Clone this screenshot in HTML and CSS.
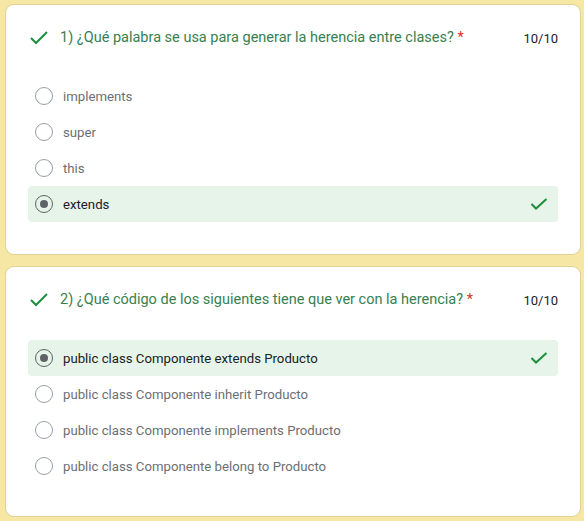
FILE: index.html
```html
<!DOCTYPE html>
<html lang="es">
<head>
<meta charset="utf-8">
<link rel="stylesheet" href="styles.css">
</head>
<body>
<div class="page">
  <section class="card">
    <div class="header">
      <svg class="qcheck" width="18" height="14" viewBox="0 0 18 14"><polyline points="1,7 6,12 17,1" fill="none" stroke="#1e8e3e" stroke-width="2"/></svg>
      <div class="title">1) ¿Qué palabra se usa para generar la herencia entre clases? <span class="req">*</span></div>
      <div class="score">10/10</div>
    </div>
    <div class="options">
      <div class="opt"><span class="radio"></span><span class="label">implements</span></div>
      <div class="opt"><span class="radio"></span><span class="label">super</span></div>
      <div class="opt"><span class="radio"></span><span class="label">this</span></div>
      <div class="opt correct"><span class="radio on"></span><span class="label">extends</span>
        <svg class="ocheck" width="18" height="13" viewBox="0 0 18 13"><polyline points="1.5,6 6,10.5 16.5,1" fill="none" stroke="#1e8e3e" stroke-width="2"/></svg></div>
    </div>
  </section>
  <section class="card">
    <div class="header">
      <svg class="qcheck" width="18" height="14" viewBox="0 0 18 14"><polyline points="1,7 6,12 17,1" fill="none" stroke="#1e8e3e" stroke-width="2"/></svg>
      <div class="title">2) ¿Qué código de los siguientes tiene que ver con la herencia? <span class="req">*</span></div>
      <div class="score">10/10</div>
    </div>
    <div class="options">
      <div class="opt correct"><span class="radio on"></span><span class="label">public class Componente extends Producto</span>
        <svg class="ocheck" width="18" height="13" viewBox="0 0 18 13"><polyline points="1.5,6 6,10.5 16.5,1" fill="none" stroke="#1e8e3e" stroke-width="2"/></svg></div>
      <div class="opt"><span class="radio"></span><span class="label">public class Componente inherit Producto</span></div>
      <div class="opt"><span class="radio"></span><span class="label">public class Componente implements Producto</span></div>
      <div class="opt"><span class="radio"></span><span class="label">public class Componente belong to Producto</span></div>
    </div>
  </section>
</div>
</body>
</html>
```
FILE: styles.css
```css
html, body {
  margin: 0;
  padding: 0;
  background: #f6e8a4;
  font-family: Roboto, "Liberation Sans", sans-serif;
}
.page {
  display: flex;
  flex-direction: column;
  gap: 13px;
  padding: 5px 4px 5px 6px;
}
.card {
  background: #ffffff;
  border-radius: 8px;
  box-shadow: 0 0 0 1px rgba(200, 190, 140, 0.5);
  padding: 24px 22px 32px;
  height: 249px;
  box-sizing: border-box;
}
.header {
  display: flex;
  align-items: center;
  height: 18px;
  padding-left: 2px;
  margin-bottom: 31px;
}
.qcheck {
  flex: none;
  margin-right: 12px;
}
.title {
  flex: 1;
  font-size: 14.5px;
  color: #38804f;
  line-height: 18px;
}
.req {
  color: #d93025;
}
.score {
  font-size: 13px;
  color: #202124;
}
.options {
  display: flex;
  flex-direction: column;
}
.opt {
  display: flex;
  align-items: center;
  height: 36px;
  padding: 0 10px 0 7px;
  border-radius: 4px;
}
.opt.correct {
  background: #e6f4ea;
}
.radio {
  flex: none;
  width: 18px;
  height: 18px;
  box-sizing: border-box;
  border: 1.5px solid #9aa0a6;
  border-radius: 50%;
  margin-right: 10px;
  display: flex;
  align-items: center;
  justify-content: center;
}
.radio.on {
  border-color: #5f6368;
}
.radio.on::after {
  content: "";
  width: 8px;
  height: 8px;
  border-radius: 50%;
  background: #5f6368;
}
.label {
  flex: 1;
  font-size: 13.2px;
  color: #6b6f74;
}
.correct .label {
  color: #202124;
}
.ocheck {
  flex: none;
}
```
